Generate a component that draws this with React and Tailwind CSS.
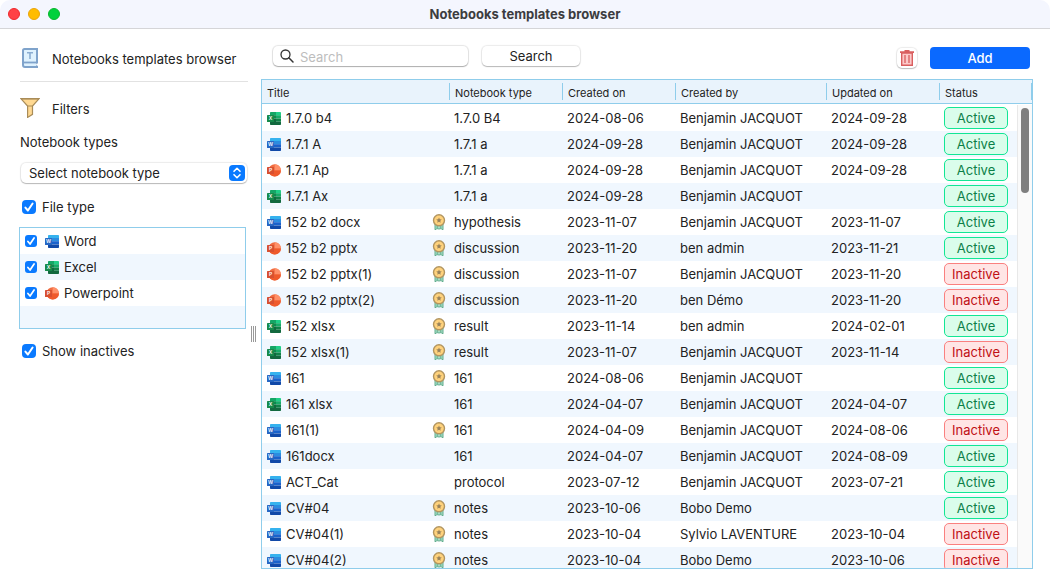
import React from "react";

const FILE_TYPES = [
  { kind: "word", label: "Word" },
  { kind: "excel", label: "Excel" },
  { kind: "powerpoint", label: "Powerpoint" },
];

const COLUMNS = ["Title", "Notebook type", "Created on", "Created by", "Updated on", "Status"];

const BJ = "Benjamin JACQUOT";

const TEMPLATES = [
  ["excel", "1.7.0 b4", false, "1.7.0 B4", "2024-08-06", BJ, "2024-09-28", true],
  ["word", "1.7.1 A", false, "1.7.1 a", "2024-09-28", BJ, "2024-09-28", true],
  ["powerpoint", "1.7.1 Ap", false, "1.7.1 a", "2024-09-28", BJ, "2024-09-28", true],
  ["excel", "1.7.1 Ax", false, "1.7.1 a", "2024-09-28", BJ, "", true],
  ["word", "152 b2 docx", true, "hypothesis", "2023-11-07", BJ, "2023-11-07", true],
  ["powerpoint", "152 b2 pptx", true, "discussion", "2023-11-20", "ben admin", "2023-11-21", true],
  ["powerpoint", "152 b2 pptx(1)", true, "discussion", "2023-11-07", BJ, "2023-11-20", false],
  ["powerpoint", "152 b2 pptx(2)", true, "discussion", "2023-11-20", "ben Démo", "2023-11-20", false],
  ["excel", "152 xlsx", true, "result", "2023-11-14", "ben admin", "2024-02-01", true],
  ["excel", "152 xlsx(1)", true, "result", "2023-11-07", BJ, "2023-11-14", false],
  ["word", "161", true, "161", "2024-08-06", BJ, "", true],
  ["excel", "161 xlsx", false, "161", "2024-04-07", BJ, "2024-04-07", true],
  ["word", "161(1)", true, "161", "2024-04-09", BJ, "2024-08-06", false],
  ["word", "161docx", false, "161", "2024-04-07", BJ, "2024-08-09", true],
  ["word", "ACT_Cat", false, "protocol", "2023-07-12", BJ, "2023-07-21", true],
  ["word", "CV#04", true, "notes", "2023-10-06", "Bobo Demo", "", true],
  ["word", "CV#04(1)", true, "notes", "2023-10-04", "Sylvio LAVENTURE", "2023-10-04", false],
  ["word", "CV#04(2)", true, "notes", "2023-10-04", "Bobo Demo", "2023-10-06", false],
];

function TileLetter({ letter, color }) {
  return (
    <>
      <rect x="0" y="4" width="7" height="7" rx="0.6" fill={color} />
      <text x="3.5" y="9.300" fontSize="5" fontWeight="600" fill="#fff" textAnchor="middle" fontFamily="Inter, sans-serif">
        {letter}
      </text>
    </>
  );
}

function FileIcon({ kind }) {
  if (kind === "word") {
    return (
      <svg className="size-3.5 shrink-0" viewBox="0 0 14 14" aria-hidden="true">
        <path d="M3.8 1h9.4a.8.8 0 0 1 .8.8V4H3V1.8a.8.8 0 0 1 .8-.8z" fill="#35b2ee" />
        <path d="M3 4h11v3.200H3z" fill="#2b8ce0" />
        <path d="M3 7.200h11v3.200H3z" fill="#1a62cc" />
        <path d="M3 10.400h11v2.800a.8.8 0 0 1-.8.8H3.800a.8.8 0 0 1-.8-.8z" fill="#1149a8" />
        <TileLetter letter="W" color="#2767c4" />
      </svg>
    );
  }
  if (kind === "excel") {
    return (
      <svg className="size-3.5 shrink-0" viewBox="0 0 14 14" aria-hidden="true">
        <path d="M3.800 1H9v3.200H3V1.800a.8.8 0 0 1 .8-.8z" fill="#14a565" />
        <path d="M9 1h4.200a.8.8 0 0 1 .8.8v2.400H9z" fill="#20cf87" />
        <path d="M3 4.200h6v3.300H3z" fill="#0b8a4c" />
        <path d="M9 4.200h5v3.300H9z" fill="#17ab68" />
        <path d="M3 7.500h6V14H3.800a.8.8 0 0 1-.8-.8z" fill="#12693f" />
        <path d="M9 7.500h5v3.200H9z" fill="#0f8348" />
        <path d="M9 10.700h5v2.500a.8.8 0 0 1-.8.8H9z" fill="#12693f" />
        <TileLetter letter="X" color="#168a4b" />
      </svg>
    );
  }
  return (
    <svg className="size-3.5 shrink-0" viewBox="0 0 14 14" aria-hidden="true">
      <circle cx="7.700" cy="7.400" r="6.200" fill="#f06c40" />
      <path d="M7.700 1.200a6.200 6.200 0 0 1 6.200 6.200H7.700z" fill="#ff9068" />
      <path d="M1.500 7.400h12.400a6.200 6.200 0 0 1-12.400 0z" fill="#ef5a2b" />
      <TileLetter letter="P" color="#d85030" />
    </svg>
  );
}

function Medal() {
  return (
    <svg className="h-4 w-3.5 shrink-0" viewBox="0 0 14 16" role="img" aria-label="Certified">
      <path d="M3 10h8v5.800L9 14.600 7 15l-2-.4-2 1.200z" fill="#a5dcc5" stroke="#62ad8d" strokeWidth="1" />
      <path d="M5.200 11.500v2.500M8.800 11.500v2.500" stroke="#62ad8d" strokeWidth="1" />
      <circle cx="7" cy="6.300" r="5.500" fill="#ffd27c" stroke="#b29560" strokeWidth="1.400" />
      <path
        d="M7 3.500l.8 1.800 2 .2-1.500 1.300.4 2L7 7.800l-1.700 1 .4-2-1.500-1.300 2-.2z"
        fill="#98825a"
      />
    </svg>
  );
}

function TemplateBookIcon() {
  return (
    <svg className="h-5 w-4" viewBox="0 0 16 20" aria-hidden="true">
      <path d="M2.500 1H15v18H3a2 2 0 0 1-2-2V2.500A1.500 1.500 0 0 1 2.500 1z" fill="#dff2fe" stroke="#7fa3cb" strokeWidth="2" />
      <path d="M1 14.500h14" stroke="#7fa3cb" strokeWidth="1.800" />
      <path d="M5 4.800h6M8 5v6" stroke="#8badd2" strokeWidth="1.600" fill="none" />
      <path d="M16 15.400h-1.200l-.8 1.100.8 1.300H16z" fill="#fff" />
    </svg>
  );
}

function FunnelIcon() {
  return (
    <svg className="size-5" viewBox="0 0 20 20" aria-hidden="true">
      <path d="M.9 .6h18.200L12.500 8v8.300L7.600 19.400V8z" fill="#ffd992" stroke="#a98c58" strokeWidth="1.200" />
      <path d="M1 1h18M7.600 8h4.900" stroke="#a98c58" strokeWidth="1" />
    </svg>
  );
}

function TrashIcon() {
  return (
    <svg className="h-4 w-3.5" viewBox="0 0 14 16" aria-hidden="true">
      <path d="M1.700 3h10.600v12.200H1.700z" fill="#fcc9c9" stroke="#d95f60" strokeWidth="1.400" />
      <path d="M0 2.200h14M4.500 1h5" stroke="#d95f60" strokeWidth="1.800" />
      <path d="M5 5v8M9 5v8" stroke="#d95f60" strokeWidth="1.300" />
    </svg>
  );
}

function Check({ id, small }) {
  return (
    <span className="grid shrink-0 place-items-center">
      <input
        id={id}
        type="checkbox"
        defaultChecked
        className={
          "peer col-start-1 row-start-1 appearance-none border border-gray-300 bg-white checked:border-transparent checked:bg-[#0a7aff] " +
          (small ? "size-3 rounded-[3px]" : "size-3.5 rounded-[4px]")
        }
      />
      <svg
        className={
          "pointer-events-none invisible col-start-1 row-start-1 peer-checked:visible " +
          (small ? "size-3" : "size-3.5")
        }
        viewBox="0 0 14 14"
        aria-hidden="true"
      >
        <path d="M3.400 7.600l2.500 2.900 4.700-7" fill="none" stroke="#fff" strokeWidth="2" strokeLinecap="round" strokeLinejoin="round" />
      </svg>
    </span>
  );
}

function Sidebar() {
  return (
    <aside className="w-[250px] shrink-0 pl-5 pr-0.5">
      <div className="flex h-[53px] items-center gap-3.5 border-b border-[#e2e2e2] pl-0.5 pt-1.5">
        <TemplateBookIcon />
        <h2 className="pt-0.5">Notebooks templates browser</h2>
      </div>
      <div className="flex h-[52px] items-center gap-3">
        <FunnelIcon />
        <h2 className="pt-0.5">Filters</h2>
      </div>
      <label htmlFor="notebook-type" className="block">
        Notebook types
      </label>
      <div className="mx-px mt-[13px] grid items-center">
        <select
          id="notebook-type"
          className="col-start-1 row-start-1 h-5 w-full appearance-none rounded-[5px] bg-white pl-2 pr-6 shadow-[0_0_1px_1px_rgba(0,0,0,0.08),0_1px_1px_rgba(0,0,0,0.22)]"
        >
          <option>Select notebook type</option>
        </select>
        <svg
          className="pointer-events-none col-start-1 row-start-1 mr-0.5 size-4 justify-self-end rounded-[4px] bg-[#0a7aff]"
          viewBox="0 0 16 16"
          aria-hidden="true"
        >
          <path d="M5 6.300L8 3.300l3 3M5 9.700l3 3 3-3" fill="none" stroke="#fff" strokeWidth="1.600" strokeLinecap="round" strokeLinejoin="round" />
        </svg>
      </div>
      <label className="mt-4 flex items-center gap-1.5 pl-0.5">
        <Check id="file-type" />
        File type
      </label>
      <ul className="-ml-px mr-0.5 mt-3 border border-[#8fcdeb]">
        {FILE_TYPES.map((type) => (
          <li key={type.kind} className="odd:bg-white even:bg-[#f0f7fe]">
            <label className="flex h-[26px] items-center pl-[5px]">
              <Check id={"type-" + type.kind} small />
              <span className="ml-2 mr-[5px] flex">
                <FileIcon kind={type.kind} />
              </span>
              {type.label}
            </label>
          </li>
        ))}
        <li className="h-[22px] bg-[#f0f7fe]" aria-hidden="true" />
      </ul>
      <label className="mt-3.5 flex items-center gap-1.5 pl-0.5">
        <Check id="show-inactives" />
        Show inactives
      </label>
    </aside>
  );
}

function StatusBadge({ active }) {
  return (
    <span
      className={
        "flex h-[22px] w-16 items-center justify-center rounded-[5px] border " +
        (active
          ? "border-[#12e695] bg-[#dafdeb] text-[#0b8048]"
          : "border-[#fa8080] bg-[#ffe5e5] text-[#c01015]")
      }
    >
      {active ? "Active" : "Inactive"}
    </span>
  );
}

function TemplatesTable() {
  return (
    <div className="relative min-h-0 flex-1 border border-[#8fcdeb]">
      <div className="h-full overflow-y-auto [scrollbar-width:none]">
        <table className="w-full table-fixed border-separate border-spacing-0 text-left">
          <colgroup>
            <col />
            <col className="w-[113px]" />
            <col className="w-[113px]" />
            <col className="w-[151px]" />
            <col className="w-[113px]" />
            <col className="w-[92px]" />
          </colgroup>
          <thead className="sticky top-0 z-20">
            <tr>
              {COLUMNS.map((name) => (
                <th key={name} scope="col" className="bg-white p-0 pb-px text-[11px] font-normal">
                  <div className="h-6 border-b border-[#8fcdeb] bg-[#e9f3fc] py-[3px]">
                    <div className="h-[17px] border-r border-[#8fcdeb] pl-[5px] pt-[3px] leading-[14px]">{name}</div>
                  </div>
                </th>
              ))}
            </tr>
          </thead>
          <tbody>
            {TEMPLATES.map(([kind, title, certified, type, created, author, updated, active]) => (
              <tr key={title} className="h-[26px] whitespace-nowrap odd:bg-white even:bg-[#f0f7fe]">
                <td className="py-0 pl-[5px] pr-1">
                  <div className="flex items-center gap-[5px]">
                    <FileIcon kind={kind} />
                    <span className="flex-1 truncate">{title}</span>
                    {certified && <Medal />}
                  </div>
                </td>
                <td className="py-0 pl-1">{type}</td>
                <td className="py-0 pl-1">{created}</td>
                <td className="py-0 pl-1">{author}</td>
                <td className="py-0 pl-1">{updated}</td>
                <td className="py-0 pl-1">
                  <StatusBadge active={active} />
                </td>
              </tr>
            ))}
          </tbody>
        </table>
      </div>
      <div className="absolute bottom-0 right-0 top-[25px] z-10 w-[15px] border-l border-[#e8e8e8] bg-[#fafafa] pl-[3px] pt-[3px]">
        <div className="h-[85px] w-2 rounded-full bg-[#7f7f7f]" />
      </div>
    </div>
  );
}

export default function App() {
  return (
    <div className="flex h-screen flex-col bg-white font-['Inter','Liberation_Sans',sans-serif] text-[13px] leading-4 text-[#222]">
      <header className="grid h-[29px] shrink-0 grid-cols-[1fr_auto_1fr] items-center rounded-t-[10px] border-b border-[#d5d5d8] bg-[#f4f6fe] px-2">
        <div className="flex gap-2">
          <button aria-label="Close" className="size-3 rounded-full border border-[#f0282d] bg-[#ff4145]" />
          <button aria-label="Minimize" className="size-3 rounded-full border border-[#eba50a] bg-[#ffbc00]" />
          <button aria-label="Zoom" className="size-3 rounded-full border border-[#08b72c] bg-[#00d13c]" />
        </div>
        <h1 className="font-bold text-[#3c3c40]">Notebooks templates browser</h1>
      </header>
      <div className="flex min-h-0 flex-1">
        <Sidebar />
        <div className="flex w-[11px] shrink-0 items-center pl-px pt-[50px]">
          <div className="h-4 w-[5px] border-x border-[#999] px-px">
            <div className="mx-auto h-full w-px bg-[#999]" />
          </div>
        </div>
        <main className="flex min-w-0 flex-1 flex-col pb-[19px] pr-[17px]">
          <div className="flex h-[50px] shrink-0 items-center gap-3.5 pl-3 pr-[3px] pt-1">
            <div className="grid w-[195px] items-center">
              <input
                type="search"
                aria-label="Search"
                placeholder="Search"
                className="col-start-1 row-start-1 h-5 w-full rounded-[5px] bg-white pl-[27px] pr-2 pt-0.5 shadow-[0_0_1px_1px_rgba(0,0,0,0.1),0_1px_1px_rgba(0,0,0,0.25)] placeholder:text-[#bdbdbd]"
              />
              <svg
                className="pointer-events-none col-start-1 row-start-1 ml-[7px] size-3.5"
                viewBox="0 0 14 14"
                aria-hidden="true"
              >
                <circle cx="5.500" cy="5.500" r="4.500" fill="none" stroke="#333" strokeWidth="1.300" />
                <path d="M8.800 8.800l4.200 4.200" stroke="#333" strokeWidth="1.500" strokeLinecap="round" />
              </svg>
            </div>
            <button className="h-5 w-[98px] rounded-[5px] bg-white shadow-[0_0_1px_1px_rgba(0,0,0,0.08),0_1px_1px_rgba(0,0,0,0.22)]">
              Search
            </button>
            <div className="ml-auto flex items-center gap-[13px] pt-1">
              <button
                aria-label="Delete"
                className="flex size-5 items-center justify-center rounded-[5px] bg-white shadow-[0_0_1px_1px_rgba(0,0,0,0.08),0_1px_1px_rgba(0,0,0,0.2)]"
              >
                <TrashIcon />
              </button>
              <button className="h-[22px] w-[100px] rounded-[4px] bg-[#0a69ff] font-medium text-white">Add</button>
            </div>
          </div>
          <TemplatesTable />
        </main>
      </div>
    </div>
  );
}
